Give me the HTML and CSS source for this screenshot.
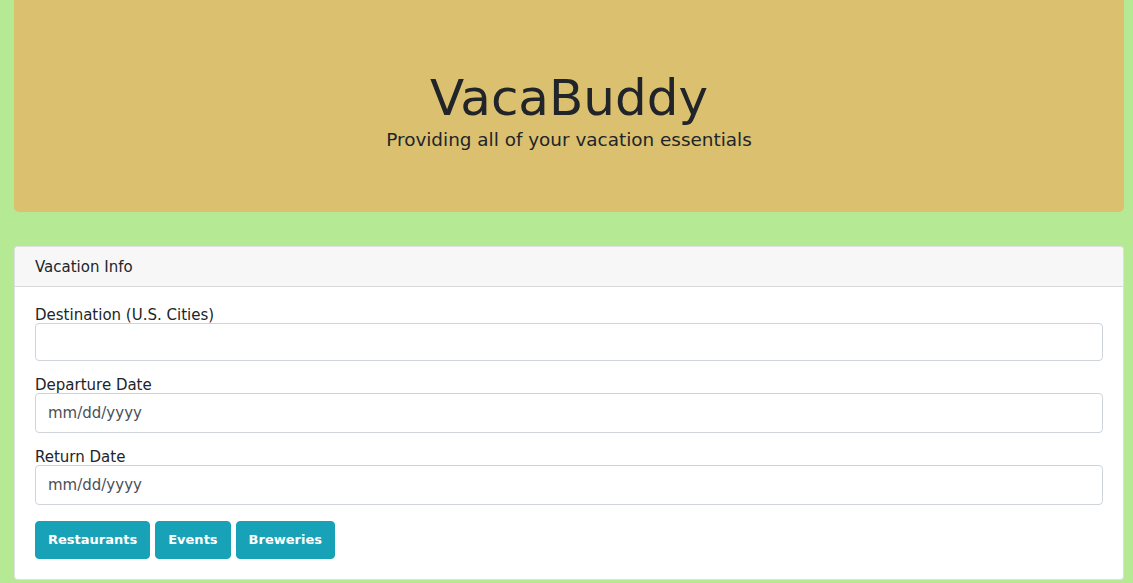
FILE: index.html
```html
<!DOCTYPE html>
<html lang="en">
<head>
<meta charset="utf-8">
<title>VacaBuddy</title>
<link rel="stylesheet" href="styles.css">
</head>
<body>
<div class="page">
  <header class="hero">
    <h1 class="hero-title">VacaBuddy</h1>
    <p class="hero-lead">Providing all of your vacation essentials</p>
  </header>
  <section class="card">
    <div class="card-header">Vacation Info</div>
    <form class="card-body">
      <div class="form-group">
        <label class="label" for="dest">Destination (U.S. Cities)</label>
        <input class="control" id="dest" type="text">
      </div>
      <div class="form-group">
        <label class="label" for="dep">Departure Date</label>
        <input class="control control-date" id="dep" type="text" placeholder="mm/dd/yyyy">
      </div>
      <div class="form-group">
        <label class="label" for="ret">Return Date</label>
        <input class="control control-date" id="ret" type="text" placeholder="mm/dd/yyyy">
      </div>
      <div class="actions">
        <button type="button" class="btn">Restaurants</button>
        <button type="button" class="btn">Events</button>
        <button type="button" class="btn">Breweries</button>
      </div>
    </form>
  </section>
</div>
</body>
</html>
```
FILE: styles.css
```css
* { box-sizing: border-box; }
html, body { margin: 0; padding: 0; }
body {
  background: #b6e993;
  color: #212529;
  font-family: "Comic Sans MS", "DejaVu Sans", sans-serif;
  font-size: 15px;
  overflow: hidden;
}
.page {
  padding: 0 9px 0 14px;
}
.hero {
  background: #dbc070;
  border-radius: 0 0 5px 5px;
  height: 212px;
  display: flex;
  flex-direction: column;
  align-items: center;
  justify-content: flex-start;
  padding-top: 66px;
  margin-bottom: 34px;
}
.hero-title {
  margin: 0;
  font-size: 50px;
  font-weight: 400;
  line-height: 64px;
}
.hero-lead {
  margin: 0;
  font-size: 18.4px;
  line-height: 20px;
}
.card {
  background: #fff;
  border: 1px solid rgba(0,0,0,.125);
  border-radius: 4px;
}
.card-header {
  background: #f7f7f7;
  border-bottom: 1px solid rgba(0,0,0,.125);
  padding: 12px 20px 11px;
  line-height: 16px;
  border-radius: 4px 4px 0 0;
}
.card-body {
  padding: 20px 20px 20px;
  margin: 0;
}
.form-group {
  margin-bottom: 16px;
}
.label {
  display: block;
  line-height: 16px;
}
.control {
  display: block;
  width: 100%;
  height: 38px;
  border: 1px solid #ced4da;
  border-radius: 4px;
  padding: 6px 12px;
  font: inherit;
  color: #495057;
  background: #fff;
}
.control-date { height: 40px; }
.control::placeholder { color: #495057; opacity: 1; }
.actions {
  display: flex;
  gap: 5px;
}
.btn {
  background: #17a2b8;
  color: #fff;
  border: 1px solid #17a2b8;
  border-radius: 4px;
  font-family: inherit;
  font-size: 13px;
  font-weight: 700;
  line-height: 24px;
  padding: 6px 12px;
}
```
